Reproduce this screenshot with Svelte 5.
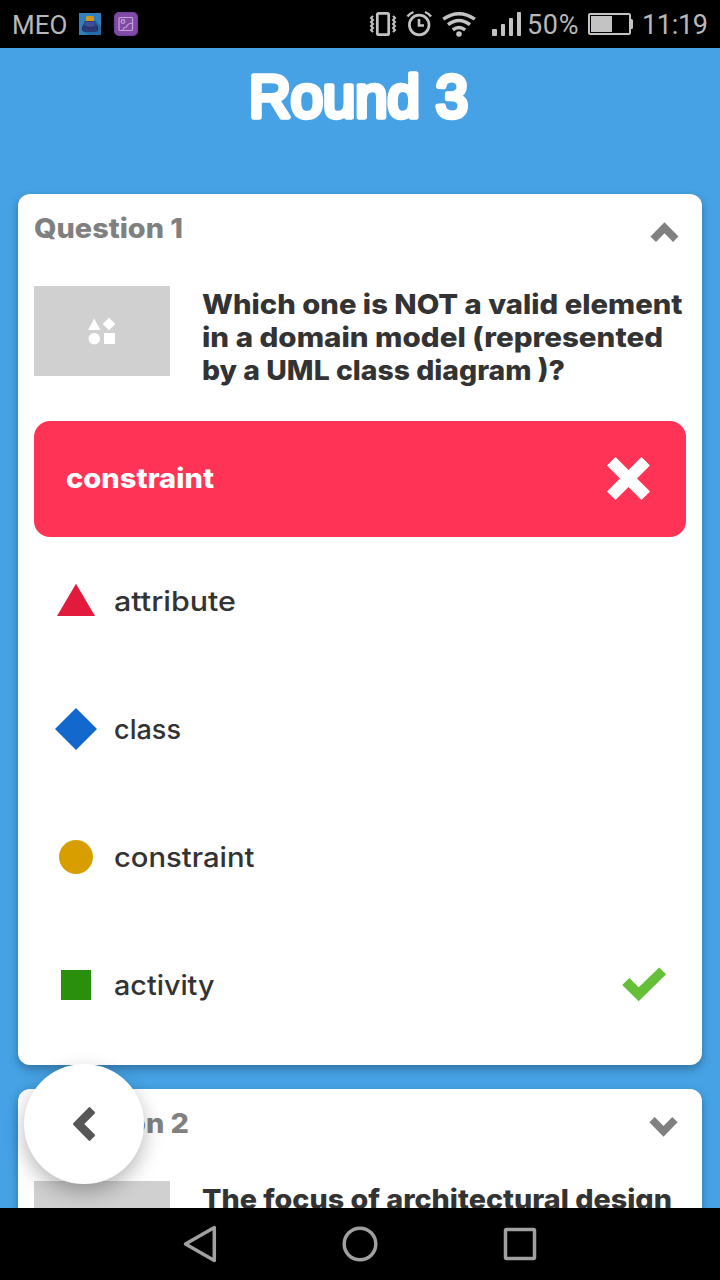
<script>
  const questionLines = [
    { text: 'Which one is NOT a valid element', width: 480.5 },
    { text: 'in a domain model (represented', width: 461 },
    { text: 'by a UML class diagram )?', width: 363 }
  ];
  const options = [
    { shape: 'triangle', text: 'attribute', width: 122 },
    { shape: 'diamond', text: 'class', width: 67 },
    { shape: 'circle', text: 'constraint', width: 140.5 },
    { shape: 'square', text: 'activity', width: 100.5, correct: true }
  ];
</script>

{#snippet line(text, width, cls)}
  <svg class="line {cls}" {width} height="33">
    <text x={cls === 'heading' || cls === 'white' ? 0 : -1} y="25" textLength={width} lengthAdjust="spacingAndGlyphs">{text}</text>
  </svg>
{/snippet}

{#snippet thumb()}
  <div class="thumb">
    <svg width="28" height="28" viewBox="88 317 28 28" fill="#fff">
      <path d="M94.3 318.6 100.5 330H88.1ZM109 317.7l6.4 6.3-6.4 6.3-6.4-6.3ZM104 333h11v11h-11Z" />
      <circle cx="94.3" cy="338.7" r="5.8" />
    </svg>
  </div>
{/snippet}

<div class="screen">
  <header class="status">
    <span class="carrier">MEO</span>
    <svg class="app-icon" width="22" height="22" viewBox="0 0 22 22">
      <path fill="#2f80bd" d="M0 0h22v22H0Z" />
      <path fill="#246ca6" d="m16 7 6 6v9H9l-5-4Z" />
      <path fill="#283b78" d="M5 10Q6 7 11 7t6 3l2 5q0 4-3 4H6q-3 0-3-4Z" />
      <path fill="#d49518" d="M7 3.5q4-1.5 8 0V8H7Z" />
      <path fill="#3d4f96" d="M5 8q6 2 12 0l-1 5q-5 2-10 0Z" />
      <path fill="none" stroke="#222b63" d="M5 12q-3 3-1 6M17 12q3 3 1 6M6 14q5 2 10 0" />
    </svg>
    <svg class="gallery" width="24" height="24" viewBox="0 0 24 24" fill="none" stroke="#c5a5d8" stroke-width="1.2">
      <rect x=".5" y=".5" width="23" height="23" rx="4.5" fill="#824aa7" stroke="#75429a" />
      <rect x="5" y="5.5" width="13.5" height="13" rx="1" />
      <circle cx="9" cy="9.5" r="1.8" />
      <path d="M9 18.5q0-3 3.5-3.5.5-3.5 6-4" />
    </svg>
    <svg class="system" width="154" height="26" viewBox="369 11 154 26" fill="none" stroke="#c3c3c3">
      <rect x="377.3" y="13.3" width="11.4" height="21.4" rx="1.5" stroke-width="2.7" />
      <path stroke-width="2" d="m373 16-2 2 2 2-2 2 2 2-2 2 2 2-2 2 2 2M393 16l2 2-2 2 2 2-2 2 2 2-2 2 2 2-2 2" />
      <circle cx="419.2" cy="25" r="9.8" stroke-width="2.7" />
      <path stroke-width="2.6" d="M419 19v6.5h5" />
      <path stroke-width="2.4" d="M407.5 16.5q2-3 6-4.5M431 16.5q-2-3-6-4.5" />
      <path stroke-width="3.4" d="M443.2 19.2q15.8-11 31.6 0M448 24.7q11-8.4 22 0M452.8 29.8q6.2-4.8 12.4 0" />
      <circle cx="459" cy="34" r="2.8" fill="#c3c3c3" stroke="none" />
      <g fill="#c3c3c3" stroke="none">
        <rect x="492" y="29" width="5" height="7" rx="1" />
        <rect x="501" y="24" width="4" height="12" rx="1" />
        <rect x="509" y="18" width="4" height="18" rx="1" />
        <rect x="517" y="12" width="4" height="24" rx="1" />
      </g>
    </svg>
    <span class="percent">50%</span>
    <svg class="battery" width="45" height="22" viewBox="0 0 45 22">
      <rect x="1" y="1" width="41" height="20" rx="1.2" fill="none" stroke="#c3c3c3" stroke-width="2" />
      <path fill="#c3c3c3" d="M3 3h21v16H3ZM42 6h1.5q1.5 0 1.5 1.5v7q0 1.5-1.5 1.5H42Z" />
    </svg>
    <span class="clock">11:19</span>
  </header>

  <main>
    <h1>
      <svg class="title" width="220" height="60">
        <text x="-1" y="48.5" textLength="219" lengthAdjust="spacingAndGlyphs">Round 3</text>
      </svg>
    </h1>

    <section class="card">
      <div class="card-head">
        {@render line('Question 1', 149, 'heading')}
        <svg class="chevron up" width="29" height="20" viewBox="0 0 29 20" fill="#808080">
          <path d="m.5 14.6 14-14.4 14 14.4-5.5 5.3-8.5-8.6L6 19.9Z" />
        </svg>
      </div>
      <div class="question">
        {@render thumb()}
        <div class="lines">
          {#each questionLines as l}
            {@render line(l.text, l.width, 'bold')}
          {/each}
        </div>
      </div>
      <div class="given">
        {@render line('constraint', 148, 'white')}
        <svg class="cross" width="43" height="43" viewBox="0 0 43 43" fill="#fff">
          <path d="M0 8.5 8.5 0l13 13 13-13L43 8.5l-13 13 13 13-8.5 8.5-13-13-13 13L0 34.5l13-13Z" />
        </svg>
      </div>
      <ul>
        {#each options as o}
          <li>
            <svg class="shape" width="44" height="44" viewBox="-22 -22 44 44">
              {#if o.shape === 'triangle'}
                <path fill="#e21b3c" d="M0-17.2 19 15h-38Z" />
              {:else if o.shape === 'diamond'}
                <path fill="#1368ce" d="M0-21 21 0 0 21-21 0Z" />
              {:else if o.shape === 'circle'}
                <circle r="17" fill="#d89e00" />
              {:else}
                <path fill="#298f0d" d="M-15-15h30v30h-30Z" />
              {/if}
            </svg>
            {@render line(o.text, o.width, 'regular')}
            {#if o.correct}
              <svg class="check" width="44" height="35" viewBox="0 0 44 35" fill="#66bf39">
                <path d="M.2 18 7.3 11l9.4 9.3L37.2.5l6.9 6.7-27.4 27.1Z" />
              </svg>
            {/if}
          </li>
        {/each}
      </ul>
    </section>

    <section class="card">
      <div class="card-head">
        {@render line('Question 2', 155, 'heading')}
        <svg class="chevron down" width="29" height="20" viewBox="0 0 29 20" fill="#808080">
          <path d="M.4 5.3 5.7 0l8.8 9 8.8-9 5.3 5.3-14.1 14.5Z" />
        </svg>
      </div>
      <div class="question">
        {@render thumb()}
        <div class="lines">
          {@render line('The focus of architectural design', 470, 'bold')}
        </div>
      </div>
    </section>

    <button class="back" aria-label="Back">
      <svg width="24" height="36" viewBox="72 1106 24 36">
        <path fill="#575757" stroke="#575757" stroke-width="3" stroke-linejoin="round" d="m74.5 1124 15-15.3 4 4L82.2 1124l11.3 11.3-4 4Z" />
      </svg>
    </button>
  </main>

  <nav>
    <svg width="36" height="40" viewBox="182 1224 36 40"><path d="M185.5 1244 214.3 1227.5v33Z" /></svg>
    <svg width="36" height="40" viewBox="342 1224 36 40"><circle cx="360" cy="1244" r="15.8" /></svg>
    <svg width="36" height="40" viewBox="502 1224 36 40"><rect x="505.5" y="1229.5" width="29" height="29" rx="1" /></svg>
  </nav>
</div>

<style>
  :global(body) { margin: 0; background: #000; }
  .screen {
    width: 720px;
    height: 1280px;
    display: flex;
    flex-direction: column;
    overflow: hidden;
    font-family: Inter, sans-serif;
  }
  svg { display: block; flex: none; overflow: visible; }
  .status {
    height: 48px;
    flex: none;
    display: flex;
    align-items: center;
    box-sizing: border-box;
    padding-left: 12px;
    background: #000;
    color: #b8b8b8;
    font: 27px/52px Roboto, sans-serif;
    white-space: nowrap;
  }
  .status span { padding-top: 2px; }
  .carrier { width: 67px; font-size: 26px; }
  .app-icon { margin-right: 13px; }
  .gallery { margin-right: 231px; }
  .system { margin-right: 4px; }
  .percent { width: 61px; letter-spacing: .7px; }
  .battery { margin-right: 9px; }
  .clock { letter-spacing: -.3px; }
  main {
    flex: 1;
    min-height: 0;
    position: relative;
    overflow: hidden;
    background: #46a2e5;
  }
  h1 {
    margin: 0;
    height: 146px;
    box-sizing: border-box;
    padding-top: 20px;
    display: flex;
    justify-content: center;
    align-items: flex-start;
  }
  .title text {
    font: 400 60px "Liberation Sans", sans-serif;
    fill: #fff;
    stroke: #fff;
    stroke-width: 5.4px;
    stroke-linejoin: round;
  }
  .card {
    margin: 0 18px 24px;
    padding: 0 16px 16px;
    background: #fff;
    border-radius: 12px;
    box-shadow: 0 4px 10px rgba(0, 0, 0, .3);
  }
  .card-head {
    height: 92px;
    box-sizing: border-box;
    padding-top: 19px;
    display: flex;
    justify-content: space-between;
    align-items: flex-start;
  }
  .chevron { margin: 9px 7px 0 0; }
  .down { margin-right: 8px; }
  .line text { font-size: 27.5px; font-weight: 450; fill: #333; }
  .heading text { font-weight: 800; fill: #808080; }
  .bold text { font-weight: 800; }
  .white text { font-weight: 800; fill: #fff; }
  .question { height: 135px; display: flex; gap: 33px; }
  .thumb {
    width: 136px;
    height: 90px;
    flex: none;
    display: flex;
    align-items: center;
    justify-content: center;
    background: #d0d0d0;
  }
  .lines { padding-top: 3px; }
  .given {
    height: 116px;
    box-sizing: border-box;
    padding: 0 36px 0 32px;
    display: flex;
    align-items: center;
    justify-content: space-between;
    background: #ff3355;
    border-radius: 16px;
  }
  .cross { margin-bottom: 1px; }
  ul { margin: 0; padding: 0; list-style: none; }
  li { height: 128px; display: flex; align-items: center; padding: 0 20px; }
  .shape { margin-right: 17px; }
  .check { margin: 0 0 1px auto; }
  li .line { margin-top: 3px; }
  .back {
    position: absolute;
    left: 24px;
    top: 1016px;
    width: 120px;
    height: 120px;
    padding: 0;
    border: 0;
    border-radius: 50%;
    display: flex;
    align-items: center;
    justify-content: center;
    background: #fff;
    box-shadow: 0 8px 20px rgba(0, 0, 0, .28);
  }
  nav {
    height: 72px;
    flex: none;
    display: flex;
    justify-content: center;
    align-items: center;
    gap: 124px;
    background: #000;
  }
  nav svg { fill: none; stroke: #a0a0a0; stroke-width: 3.5; stroke-linejoin: round; }
</style>
